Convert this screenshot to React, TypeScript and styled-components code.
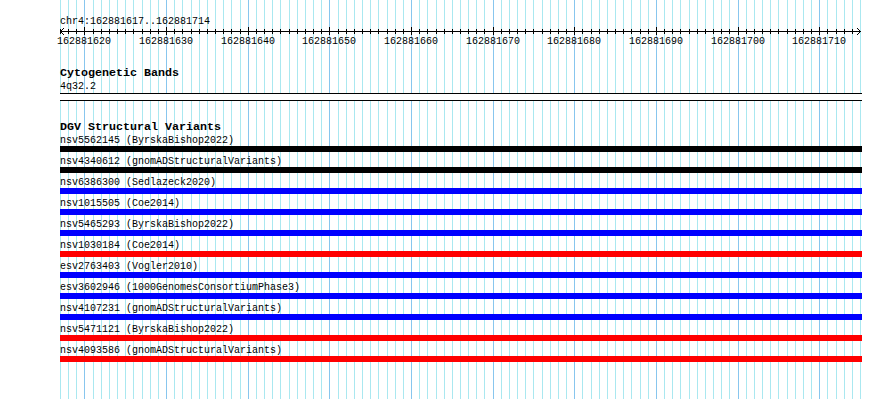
import * as React from "react"
import styled, { createGlobalStyle } from "styled-components"

const START = 162881617
const BASES = 98
const SPAN = 800
const step = SPAN / BASES

const xAt = (i: number) => Math.round(i * step)

// guideline grid drawn as one gradient with a stop pair per base
const gridImage = (() => {
  const stops: string[] = []
  for (let i = 0; i <= BASES; i++) {
    const x = xAt(i)
    const next = i < BASES ? xAt(i + 1) : x + 2
    const c = (START + i) % 10 === 0 ? "#88c6ee" : "#aae8f0"
    stops.push(`${c} ${x}px ${x + 1}px`)
    stops.push(`transparent ${x + 1}px ${next}px`)
  }
  return `linear-gradient(to right, ${stops.join(", ")})`
})()

interface IVariant {
  id: string
  source: string
  color: string
}

const variants: IVariant[] = [
  { id: "nsv5562145", source: "ByrskaBishop2022", color: "#000000" },
  { id: "nsv4340612", source: "gnomADStructuralVariants", color: "#000000" },
  { id: "nsv6386300", source: "Sedlazeck2020", color: "#0000ff" },
  { id: "nsv1015505", source: "Coe2014", color: "#0000ff" },
  { id: "nsv5465293", source: "ByrskaBishop2022", color: "#0000ff" },
  { id: "nsv1030184", source: "Coe2014", color: "#ff0000" },
  { id: "esv2763403", source: "Vogler2010", color: "#0000ff" },
  { id: "esv3602946", source: "1000GenomesConsortiumPhase3", color: "#0000ff" },
  { id: "nsv4107231", source: "gnomADStructuralVariants", color: "#0000ff" },
  { id: "nsv5471121", source: "ByrskaBishop2022", color: "#ff0000" },
  { id: "nsv4093586", source: "gnomADStructuralVariants", color: "#ff0000" }
]

const Ruler = () => {
  const ticks = []
  const labels = []
  for (let i = 0; i <= BASES - 1; i++) {
    const pos = START + i
    const x = xAt(i) + 0.5
    const major = pos % 10 === 0
    ticks.push(
      <line
        key={i}
        x1={x}
        x2={x}
        y1={major ? 0 : 2}
        y2={major ? 8 : 7}
        stroke="#000"
        strokeWidth={1}
      />
    )
    if (major) {
      labels.push(
        <RulerText key={pos} x={x - 0.5} y={16.5} textAnchor="middle">
          {pos}
        </RulerText>
      )
    }
  }
  return (
    <RulerSvg width={803} height={20} viewBox="0 0 803 20">
      <line x1={0} x2={801} y1={4.5} y2={4.5} stroke="#000" strokeWidth={1} />
      <polyline points="4,1 0.5,4.5 4,8" fill="none" stroke="#000" strokeWidth={1} />
      <polyline points="797,1 800.5,4.5 797,8" fill="none" stroke="#000" strokeWidth={1} />
      {ticks}
      {labels}
    </RulerSvg>
  )
}

export default () => (
  <Page>
    <GlobalStyle />
    <Panel>
      <Position>chr4:162881617..162881714</Position>
      <Ruler />

      <CytoTrack>
        <TrackTitle>Cytogenetic Bands</TrackTitle>
        <Label>4q32.2</Label>
        <Band />
      </CytoTrack>

      <DgvTrack>
        <TrackTitle>DGV Structural Variants</TrackTitle>
        {variants.map(v => (
          <Row key={v.id}>
            <Label>
              {v.id} ({v.source})
            </Label>
            <Bar color={v.color} />
          </Row>
        ))}
      </DgvTrack>
    </Panel>
  </Page>
)

const GlobalStyle = createGlobalStyle`
  html, body {
    margin: 0;
    padding: 0;
    background: #ffffff;
  }
  body {
    font-family: "Liberation Mono", "DejaVu Sans Mono", monospace;
    color: #000000;
  }
`

const Page = styled.div`
  width: 890px;
  height: 399px;
  overflow: hidden;
  display: flex;
  padding-left: 60px;
  box-sizing: border-box;
`

const Panel = styled.div`
  width: 803px;
  height: 399px;
  padding-top: 17px;
  box-sizing: border-box;
  display: flex;
  flex-direction: column;
  background-image: ${gridImage};
  background-repeat: no-repeat;
`

const Position = styled.div`
  font-size: 10px;
  line-height: 10px;
  height: 10px;
  white-space: nowrap;
`

const RulerSvg = styled.svg`
  display: block;
  overflow: visible;
`

const RulerText = styled.text`
  font-family: "Liberation Mono", monospace;
  font-size: 10px;
  fill: #000000;
`

const CytoTrack = styled.div`
  margin-top: 20px;
  display: flex;
  flex-direction: column;
`

const DgvTrack = styled.div`
  margin-top: 20px;
  display: flex;
  flex-direction: column;
`

const TrackTitle = styled.div`
  font-size: 11.67px;
  font-weight: bold;
  line-height: 13px;
  height: 13px;
  margin-bottom: 2px;
  white-space: nowrap;
`

const Label = styled.div`
  font-size: 10px;
  line-height: 10px;
  height: 10px;
  white-space: nowrap;
`

const Band = styled.div`
  margin-top: 1px;
  width: 802px;
  height: 6px;
  background: #ffffff;
  border-top: 1px solid #000000;
  border-bottom: 1px solid #000000;
`

const Row = styled.div`
  display: flex;
  flex-direction: column;
  height: 21px;
`

const Bar = styled.div<{ color: string }>`
  width: 802px;
  height: 6px;
  background: ${p => p.color};
`
